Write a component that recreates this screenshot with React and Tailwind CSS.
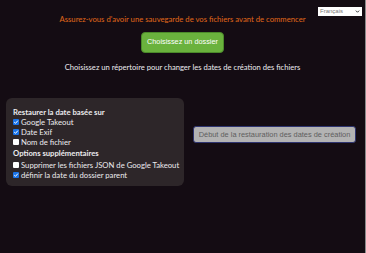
import React from 'react';

function Check({ checked, label }) {
  return (
    <label className="flex items-center gap-[2px] h-[10px] whitespace-nowrap">
      {checked ? (
        <span className="w-[6px] h-[6px] bg-[#1a73e8] rounded-[1px] flex items-center justify-center shrink-0">
          <svg viewBox="0 0 6 6" className="w-[6px] h-[6px]">
            <path d="M1.2 3.1 L2.5 4.3 L4.9 1.6" stroke="white" strokeWidth="1" fill="none" />
          </svg>
        </span>
      ) : (
        <span className="w-[6px] h-[6px] bg-white rounded-[1px] shrink-0" />
      )}
      <span>{label}</span>
    </label>
  );
}

export default function App() {
  return (
    <div className="w-[366px] h-[253px] bg-[#140c13] border-r border-[#8a8a8a] relative overflow-hidden text-[#ecebee]" style={{ fontFamily: 'Lato, "Open Sans", sans-serif' }}>
      <div className="absolute right-[3px] top-[7px] w-[44px] h-[9px] bg-white flex items-center justify-between px-[2px] text-[6px] text-[#777]" style={{ fontFamily: '"Liberation Sans", sans-serif' }}>
        <span>Français</span>
        <svg viewBox="0 0 6 4" className="w-[5px] h-[3px]">
          <path d="M0.8 0.8 L3 3 L5.2 0.8" stroke="#222" strokeWidth="1.2" fill="none" />
        </svg>
      </div>

      <div className="flex flex-col items-center pt-[14px]">
        <p className="text-[7.7px] text-[#e0681a] leading-[11px]">Assurez-vous d'avoir une sauvegarde de vos fichiers avant de commencer</p>
        <button className="mt-[7px] h-[21px] px-[5px] rounded-[4px] bg-[#6ab23d] border border-[#4b8a2a] text-white text-[7.3px]" style={{ fontFamily: '"Liberation Sans", sans-serif' }}>
          Choisissez un dossier
        </button>
        <p className="mt-[9px] text-[7.6px] leading-[11px]">Choisissez un répertoire pour changer les dates de création des fichiers</p>
      </div>

      <div className="flex mt-[25px]">
        <div className="ml-[6px] w-[178px] h-[88px] bg-[#2d2629] rounded-[6px] pl-[7px] pt-[9px] text-[7.7px] leading-[10px] flex flex-col">
          <div className="font-bold h-[10px]">Restaurer la date basée sur</div>
          <Check checked label="Google Takeout" />
          <Check checked label="Date Exif" />
          <Check label="Nom de fichier" />
          <div className="font-bold h-[11px] mt-[1px]">Options supplémentaires</div>
          <div className="h-[1px]" />
          <Check label="Supprimer les fichiers JSON de Google Takeout" />
          <Check checked label="définir la date du dossier parent" />
        </div>
        <div className="flex-1 flex justify-center pt-[28px]">
          <button className="h-[17px] px-[5px] rounded-[3px] bg-[#b3b3b3] border border-[#2e3470] text-[#5e5e5e] text-[7.4px]" style={{ fontFamily: '"Liberation Sans", sans-serif' }}>
            Début de la restauration des dates de création
          </button>
        </div>
      </div>
    </div>
  );
}
